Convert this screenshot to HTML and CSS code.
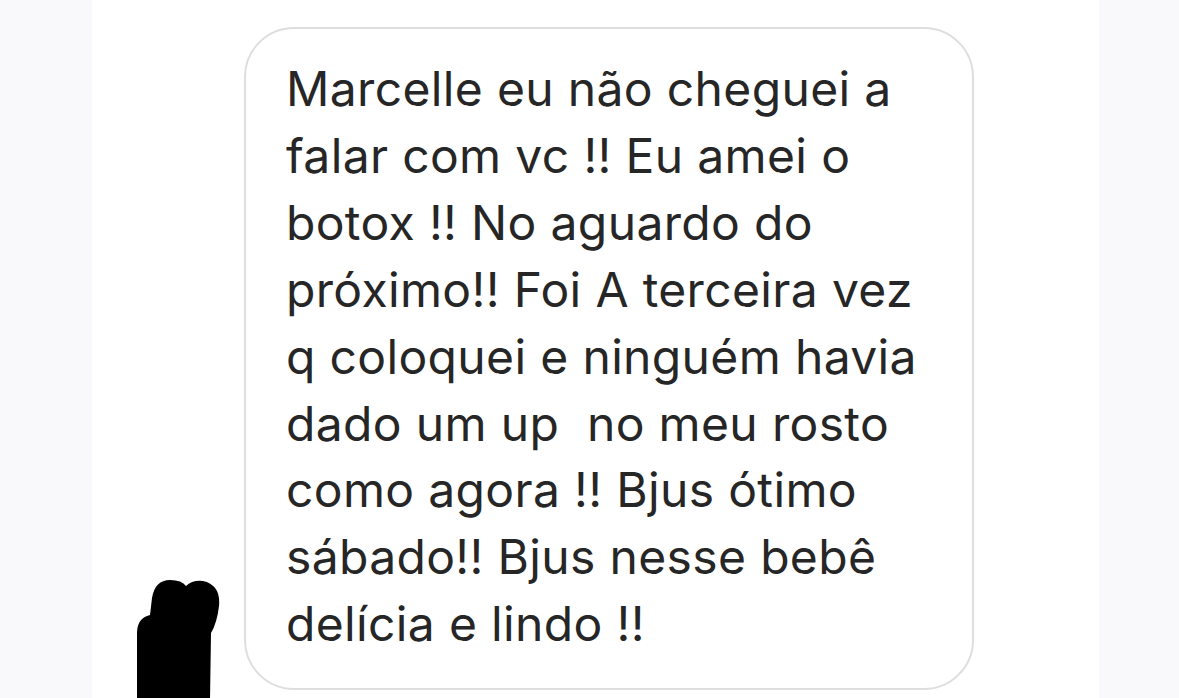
FILE: index.html
```html
<!DOCTYPE html>
<html lang="pt-br">
<head>
    <meta charset="UTF-8">
    <meta name="viewport" content="width=device-width, initial-scale=1.0">
    <title>Mensagem</title>
    <link rel="stylesheet" href="styles.css">
</head>
<body>

<div class="chat">
    <div class="row">
        <div class="avatar">
            <svg width="100" height="130" viewBox="120 568 100 130">
                <path d="M137,698 L137,630 Q137,615 150,612 L152,595 Q155,577 170,577 Q182,577 186,583 Q192,577 203,578 Q221,582 219,603 Q217,620 211,630 L210,698 Z" fill="#000"/>
            </svg>
        </div>
        <div class="bubble">
            <p class="message">Marcelle eu não cheguei a<br>
falar com vc !! Eu amei o<br>
botox !! No aguardo do<br>
próximo!! Foi A terceira vez<br>
q coloquei e ninguém havia<br>
dado um up &nbsp;no meu rosto<br>
como agora !! Bjus ótimo<br>
sábado!! Bjus nesse bebê<br>
delícia e lindo !!</p>
        </div>
    </div>
</div>

</body>
</html>
```

FILE: styles.css
```css
body {
    margin: 0;
    padding: 0;
    background-color: #f9f9fc;
    height: 698px;
    overflow: hidden;
}

.chat {
    width: 1007px;
    height: 100%;
    margin-left: 92px;
    background-color: #fff;
    padding-top: 27px;
    box-sizing: border-box;
}

.row {
    display: flex;
    align-items: flex-end;
}

.avatar {
    width: 152px;
    height: 130px;
    flex-shrink: 0;
    position: relative;
}

.avatar svg {
    position: absolute;
    left: 28px;
    top: 11px;
}

.bubble {
    width: 730px;
    height: 663px;
    box-sizing: border-box;
    border: 2px solid #dedede;
    border-radius: 50px;
    padding: 27px 0 0 40px;
}

.message {
    margin: 0;
    font-family: Inter, "Liberation Sans", sans-serif;
    font-size: 48px;
    letter-spacing: 0.35px;
    line-height: 66.9px;
    color: #262626;
    white-space: nowrap;
}
```
